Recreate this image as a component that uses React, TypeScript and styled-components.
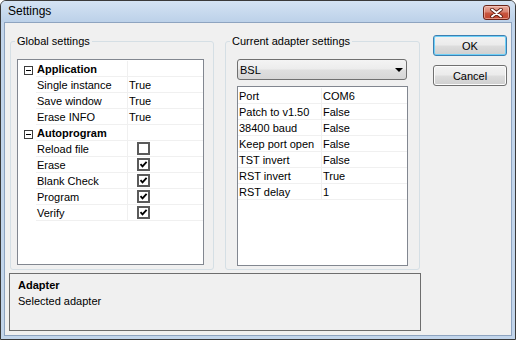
import styled, { createGlobalStyle } from "styled-components";

const GlobalStyle = createGlobalStyle`
  body {
    margin: 0;
    background: #ffffff;
    font-family: "Liberation Sans", Arial, sans-serif;
    font-size: 11px;
    color: #000;
  }
`;

type PropItem = {
  name: string;
  value?: string;
  checked?: boolean;
  category?: boolean;
};

const globalItems: PropItem[] = [
  { name: "Application", category: true },
  { name: "Single instance", value: "True" },
  { name: "Save window", value: "True" },
  { name: "Erase INFO", value: "True" },
  { name: "Autoprogram", category: true },
  { name: "Reload file", checked: false },
  { name: "Erase", checked: true },
  { name: "Blank Check", checked: true },
  { name: "Program", checked: true },
  { name: "Verify", checked: true },
];

const adapterItems: PropItem[] = [
  { name: "Port", value: "COM6" },
  { name: "Patch to v1.50", value: "False" },
  { name: "38400 baud", value: "False" },
  { name: "Keep port open", value: "False" },
  { name: "TST invert", value: "False" },
  { name: "RST invert", value: "True" },
  { name: "RST delay", value: "1" },
];

const Window = styled.div`
  width: 516px;
  height: 340px;
  box-sizing: border-box;
  border: 1px solid #3a3a3a;
  border-radius: 6px 6px 0 0;
  background: #c2d5eb;
  padding: 0 3px 3px;
  display: flex;
  flex-direction: column;
`;

const TitleBar = styled.div`
  height: 21px;
  flex: none;
  display: flex;
  align-items: flex-start;
  justify-content: space-between;
  background: linear-gradient(to bottom, #d4e3f3, #bcd1e9);
  margin: 0 -3px;
  padding: 0 5px 0 7px;
  border-radius: 5px 5px 0 0;
`;

const Title = styled.span`
  font-size: 12px;
  line-height: 21px;
  color: #000;
`;

const CloseButton = styled.div`
  margin-top: 4px;
  width: 27px;
  height: 15px;
  box-sizing: border-box;
  border: 1px solid #6a2419;
  border-radius: 3px;
  background: linear-gradient(to bottom, #e8ab9e 0%, #d98472 45%, #c8553f 55%, #c2452e 100%);
  box-shadow: inset 0 0 0 1px rgba(255, 220, 210, 0.5);
  display: flex;
  align-items: center;
  justify-content: center;
`;

const Client = styled.div`
  flex: 1;
  background: #f0f0f0;
  border: 1px solid #8ea4c0;
  display: flex;
  gap: 12px;
  padding: 12px 4px 0 4px;
`;

const Main = styled.div`
  width: 412px;
  display: flex;
  flex-direction: column;
`;

const GroupsRow = styled.div`
  display: flex;
  gap: 11px;
  padding: 0 1px;
`;

const GroupBox = styled.fieldset<{ $w: number }>`
  width: ${(p) => p.$w}px;
  height: 235px;
  box-sizing: border-box;
  min-width: 0;
  margin: 0;
  padding: 0;
  border: 1px solid #d5dfe5;
  border-radius: 3px;
`;

const Caption = styled.legend`
  margin-left: 4px;
  padding: 0 2px;
  line-height: 13px;
  font-size: 11px;
  color: #000;
`;

const Grid = styled.div<{ $w: number; $h: number; $ml: number; $mt: number }>`
  width: ${(p) => p.$w}px;
  height: ${(p) => p.$h}px;
  margin: ${(p) => p.$mt}px 0 0 ${(p) => p.$ml}px;
  box-sizing: border-box;
  border: 1px solid #828790;
  background: #ffffff;
  padding-top: 1px;
`;

const Row = styled.div<{ $cols: string }>`
  display: grid;
  grid-template-columns: ${(p) => p.$cols};
  height: 16px;
`;

const Gutter = styled.div`
  padding: 5px 0 0 6px;
`;

const MinusBox = styled.div`
  width: 9px;
  height: 9px;
  box-sizing: border-box;
  border: 1px solid #3c3c3c;
  display: flex;
  align-items: center;
  justify-content: center;
  &::after {
    content: "";
    width: 5px;
    height: 1px;
    background: #000;
  }
`;

const Cell = styled.div<{ $bold?: boolean; $sep?: boolean }>`
  box-sizing: border-box;
  height: 16px;
  border-bottom: 1px solid #f0f0f0;
  border-right: ${(p) => (p.$sep ? "1px solid #f0f0f0" : "none")};
  padding: 1px 0 0 1px;
  line-height: 14px;
  font-weight: ${(p) => (p.$bold ? 700 : 400)};
  white-space: nowrap;
  overflow: hidden;
`;

const CheckBox = styled.div`
  margin: 0 0 0 8px;
  width: 13px;
  height: 13px;
  box-sizing: border-box;
  border: 2px solid #5a5a5a;
  background: #fff;
  display: flex;
  align-items: center;
  justify-content: center;
`;

const Combo = styled.div`
  width: 170px;
  height: 21px;
  margin: 11px 0 0 11px;
  box-sizing: border-box;
  border: 1px solid #707070;
  border-radius: 3px;
  background: linear-gradient(to bottom, #f4f4f4 0%, #ececec 48%, #dfdfdf 52%, #d6d6d6 100%);
  display: flex;
  align-items: center;
  justify-content: space-between;
  padding: 0 3px 0 2px;
`;

const ComboArrow = styled.div`
  width: 0;
  height: 0;
  border-left: 4px solid transparent;
  border-right: 4px solid transparent;
  border-top: 4px solid #000;
`;

const Description = styled.div`
  margin-top: 3px;
  height: 58px;
  box-sizing: border-box;
  border: 1px solid #6d6d6d;
  background: #f0f0f0;
  padding: 3px 8px;
  line-height: 16px;
`;

const DescTitle = styled.div`
  font-weight: 700;
`;

const ButtonColumn = styled.div`
  display: flex;
  flex-direction: column;
  gap: 9px;
`;

const Button = styled.button<{ $default?: boolean }>`
  width: 74px;
  height: 21px;
  margin: 0;
  padding: 0;
  box-sizing: border-box;
  border: 1px solid ${(p) => (p.$default ? "#3c7fb1" : "#707070")};
  border-radius: 3px;
  background: linear-gradient(to bottom, #f2f2f2 0%, #ebebeb 48%, #dddddd 52%, #cfcfcf 100%);
  box-shadow: ${(p) => (p.$default ? "inset 0 0 0 1px #6fd0f7" : "inset 0 0 0 1px #fcfcfc")};
  font-family: "Liberation Sans", Arial, sans-serif;
  font-size: 11px;
  color: #000;
`;

function CheckMark() {
  return (
    <svg width="9" height="9" viewBox="0 0 9 9">
      <path d="M1.5 4.2 L3.5 6.4 L7.6 1.8" fill="none" stroke="#000" strokeWidth="1.8" />
    </svg>
  );
}

function CloseGlyph() {
  return (
    <svg width="13" height="10" viewBox="0 0 13 10">
      <path d="M2 1.5 L11 8.5 M11 1.5 L2 8.5" stroke="#5a1a10" strokeWidth="3.6" strokeLinecap="round" />
      <path d="M2 1.5 L11 8.5 M11 1.5 L2 8.5" stroke="#ffffff" strokeWidth="2" strokeLinecap="round" />
    </svg>
  );
}

function PropertyGrid({
  items,
  cols,
  gutter,
}: {
  items: PropItem[];
  cols: string;
  gutter?: boolean;
}) {
  return (
    <>
      {items.map((item) => (
        <Row $cols={cols} key={item.name}>
          {gutter && <Gutter>{item.category && <MinusBox />}</Gutter>}
          <Cell $sep $bold={item.category}>
            {item.name}
          </Cell>
          <Cell>
            {item.checked !== undefined ? (
              <CheckBox>{item.checked && <CheckMark />}</CheckBox>
            ) : (
              item.value
            )}
          </Cell>
        </Row>
      ))}
    </>
  );
}

export default function App() {
  return (
    <>
      <GlobalStyle />
      <Window>
        <TitleBar>
          <Title>Settings</Title>
          <CloseButton>
            <CloseGlyph />
          </CloseButton>
        </TitleBar>
        <Client>
          <Main>
            <GroupsRow>
              <GroupBox $w={204}>
                <Caption>Global settings</Caption>
                <Grid $w={187} $h={206} $ml={6} $mt={11}>
                  <PropertyGrid items={globalItems} cols="18px 92px 1fr" gutter />
                </Grid>
              </GroupBox>
              <GroupBox $w={195}>
                <Caption>Current adapter settings</Caption>
                <Combo>
                  <span>BSL</span>
                  <ComboArrow />
                </Combo>
                <Grid $w={171} $h={180} $ml={11} $mt={6}>
                  <PropertyGrid items={adapterItems} cols="84px 1fr" />
                </Grid>
              </GroupBox>
            </GroupsRow>
            <Description>
              <DescTitle>Adapter</DescTitle>
              <div>Selected adapter</div>
            </Description>
          </Main>
          <ButtonColumn>
            <Button $default>OK</Button>
            <Button>Cancel</Button>
          </ButtonColumn>
        </Client>
      </Window>
    </>
  );
}
